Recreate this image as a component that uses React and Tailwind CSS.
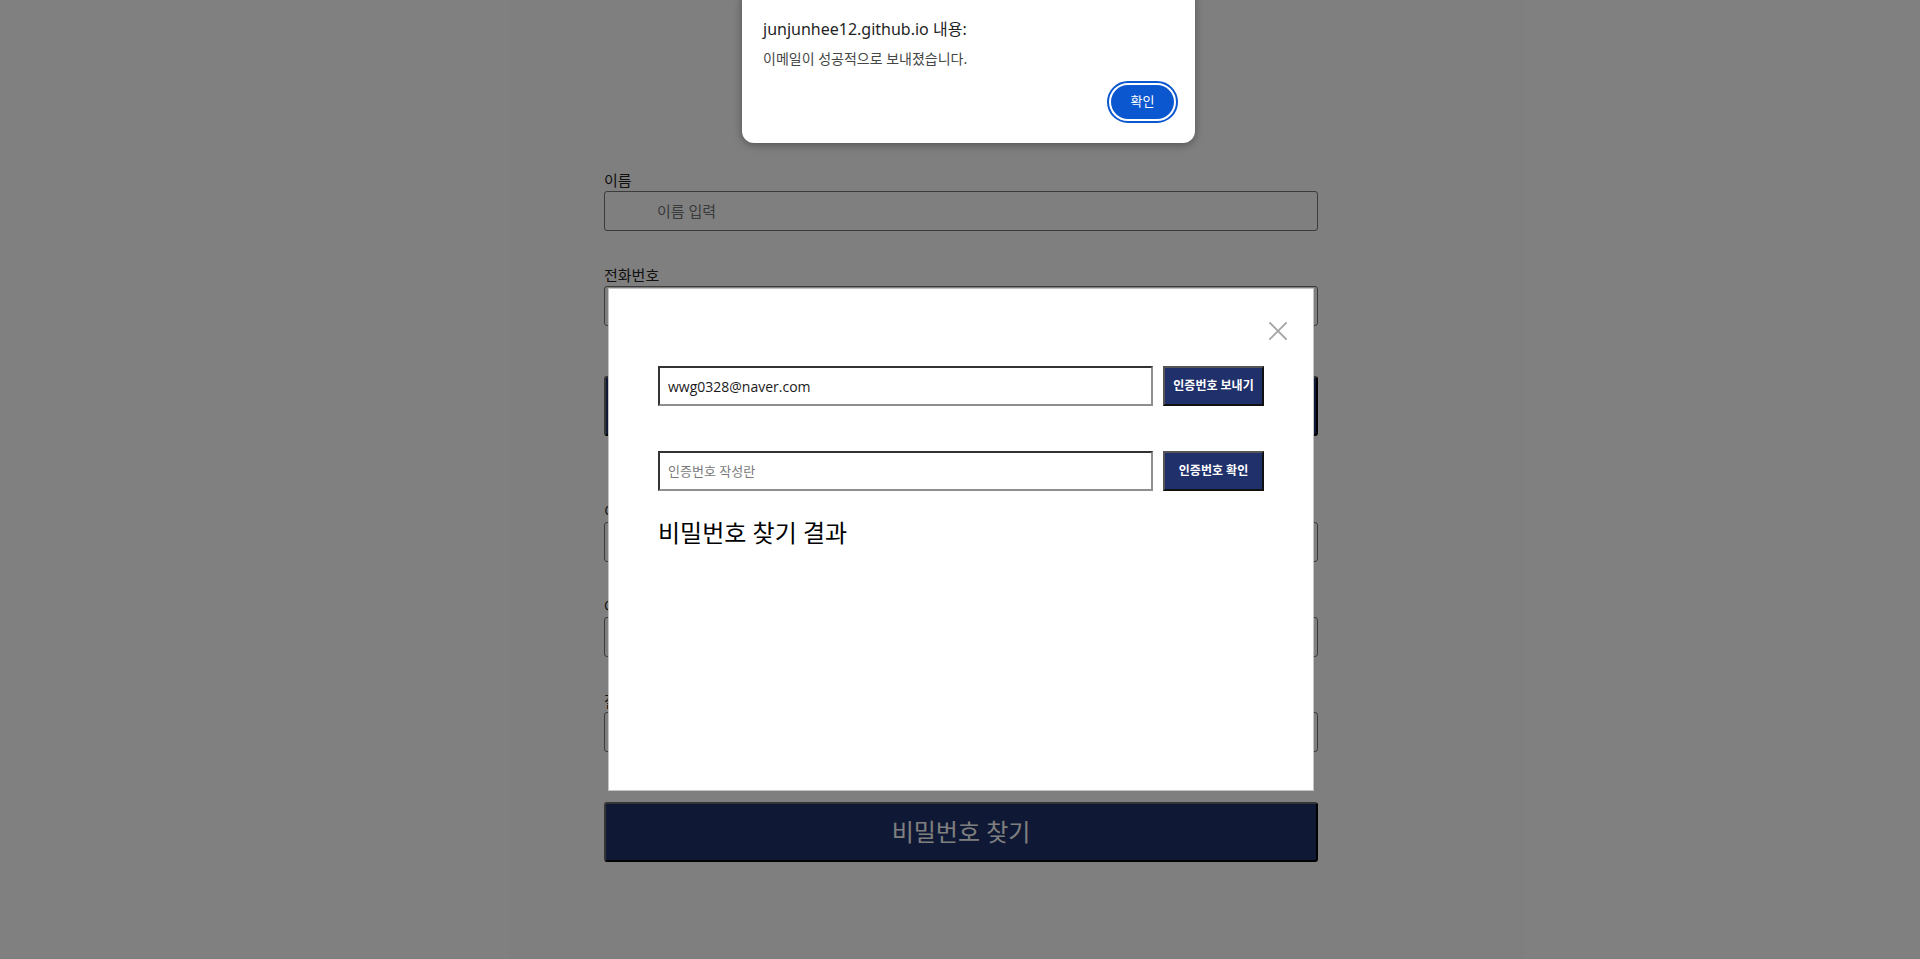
import { useState } from "react";

// background form fields (behind the dimmed overlay)
const formFields = [
  { name: "userName", label: "이름", placeholder: "이름 입력", gap: "mb-[33px]" },
  { name: "phone", label: "전화번호", placeholder: "전화번호 입력", gap: "mb-[50px]" },
];

const lowerFields = [
  { name: "email", label: "이메일", placeholder: "이메일 입력", gap: "mb-[33px]" },
  { name: "userId", label: "아이디", placeholder: "아이디 입력", gap: "mb-[33px]" },
  { name: "answer", label: "질문 답변", placeholder: "답변 입력", gap: "mb-[50px]" },
];

function FormField({ label, placeholder, gap }) {
  return (
    <div className={gap}>
      <label className="block h-[22px] text-[15px] leading-[22px] text-[#222]">
        {label}
      </label>
      <input
        type="text"
        placeholder={placeholder}
        className="block h-[40px] w-full rounded-[3px] border border-[#767676] bg-white pl-[52px] text-[15px] text-[#222] outline-none placeholder:text-[#757575]"
      />
    </div>
  );
}

function NavyButton({ children, className = "" }) {
  return (
    <button
      type="button"
      className={`block h-[60px] w-full rounded-[3px] border-2 border-t-[#6a6a6a] border-l-[#6a6a6a] border-r-black border-b-black bg-[#1e3068] text-[24px] leading-[32px] text-white ${className}`}
    >
      {children}
    </button>
  );
}

function CloseIcon() {
  return (
    <svg
      viewBox="0 0 20 20"
      className="h-[20px] w-[20px]"
      fill="none"
      stroke="#a6a6a6"
      strokeWidth="1.8"
      strokeLinecap="square"
    >
      <path d="M2 2L18 18M18 2L2 18" />
    </svg>
  );
}

function FindPasswordModal() {
  const [email, setEmail] = useState("wwg0328@naver.com");
  const [code, setCode] = useState("");

  return (
    <div className="absolute left-[608px] top-[288px] h-[503px] w-[706px] border border-[#c4c4c4] bg-white pl-[49px] pr-[49px] pt-[77px]">
      <button type="button" className="absolute right-[25px] top-[32px]">
        <CloseIcon />
      </button>

      <div className="flex h-[40px] gap-[10px]">
        <input
          type="text"
          value={email}
          onChange={(e) => setEmail(e.target.value)}
          className="h-[40px] min-w-0 flex-1 border-2 border-t-[#333] border-l-[#333] border-r-[#8f8f8f] border-b-[#8f8f8f] bg-white pl-[8px] text-[14px] text-[#1a1a1a] outline-none"
        />
        <button
          type="button"
          className="h-[40px] w-[101px] shrink-0 border-2 border-t-[#555] border-l-[#555] border-r-[#111] border-b-[#111] bg-[#1f306b] text-[12px] font-bold whitespace-nowrap text-white"
        >
          인증번호 보내기
        </button>
      </div>

      <div className="mt-[45px] flex h-[40px] gap-[10px]">
        <input
          type="text"
          value={code}
          onChange={(e) => setCode(e.target.value)}
          placeholder="인증번호 작성란"
          className="h-[40px] min-w-0 flex-1 border-2 border-t-[#333] border-l-[#333] border-r-[#8f8f8f] border-b-[#8f8f8f] bg-white pl-[8px] text-[13px] text-[#1a1a1a] outline-none placeholder:text-[#7a7a7a]"
        />
        <button
          type="button"
          className="h-[40px] w-[101px] shrink-0 border-2 border-t-[#555] border-l-[#555] border-r-[#111] border-b-[#111] bg-[#1f306b] text-[12px] font-bold whitespace-nowrap text-white"
        >
          인증번호 확인
        </button>
      </div>

      <h2 className="mt-[26px] text-[24px] leading-[32px] font-normal text-black">
        비밀번호 찾기 결과
      </h2>
    </div>
  );
}

function BrowserAlert() {
  return (
    <div className="absolute left-[742px] top-[-12px] h-[155px] w-[453px] rounded-[12px] bg-white px-[21px] pt-[31px] shadow-[0_2px_8px_rgba(0,0,0,0.35)] font-['Noto_Sans','Noto_Sans_CJK_KR',sans-serif]">
      <p className="h-[20px] text-[16px] leading-[20px] text-[#1f1f1f]">
        junjunhee12.github.io 내용:
      </p>
      <p className="mt-[11px] h-[18px] text-[14px] leading-[18px] text-[#444746]">
        이메일이 성공적으로 보내졌습니다.
      </p>
      <div className="mt-[17px] flex justify-end">
        <button
          type="button"
          className="h-[34px] w-[63px] rounded-full bg-[#0b57d0] text-[13px] text-white outline-2 outline-offset-2 outline-[#0b57d0]"
        >
          확인
        </button>
      </div>
    </div>
  );
}

export default function App() {
  return (
    <div className="relative h-[959px] overflow-hidden bg-white pl-[2px] font-['Open_Sans','Noto_Sans_CJK_KR',sans-serif]">
      <div className="mx-auto w-[714px] pt-[169px]">
        {formFields.map((field) => (
          <FormField key={field.name} {...field} />
        ))}
        <NavyButton className="mb-[64px]">인증번호 받기</NavyButton>
        {lowerFields.map((field) => (
          <FormField key={field.name} {...field} />
        ))}
        <NavyButton>비밀번호 찾기</NavyButton>
      </div>

      {/* dim overlay */}
      <div className="absolute inset-0 bg-black/50" />

      <FindPasswordModal />
      <BrowserAlert />
    </div>
  );
}
